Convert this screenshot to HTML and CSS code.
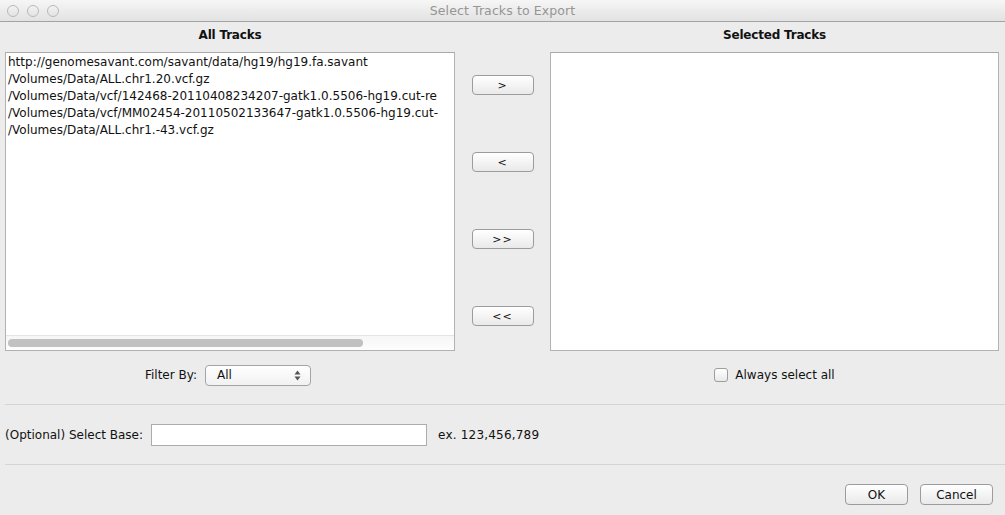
FILE: index.html
```html
<!DOCTYPE html>
<html>
<head>
<meta charset="utf-8">
<link rel="stylesheet" href="styles.css">
</head>
<body>
<div class="window">
  <div class="titlebar">
    <div class="lights">
      <span class="light"></span>
      <span class="light"></span>
      <span class="light"></span>
    </div>
    <div class="title">Select Tracks to Export</div>
  </div>

  <div class="panels">
    <div class="col col-left">
      <div class="col-head">All Tracks</div>
      <div class="list">
        <div class="list-items">
          <div class="item">http://genomesavant.com/savant/data/hg19/hg19.fa.savant</div>
          <div class="item">/Volumes/Data/ALL.chr1.20.vcf.gz</div>
          <div class="item">/Volumes/Data/vcf/142468-20110408234207-gatk1.0.5506-hg19.cut-re</div>
          <div class="item">/Volumes/Data/vcf/MM02454-20110502133647-gatk1.0.5506-hg19.cut-</div>
          <div class="item">/Volumes/Data/ALL.chr1.-43.vcf.gz</div>
        </div>
        <div class="hscroll"><div class="thumb"></div></div>
      </div>
      <div class="under">
        <span class="label">Filter By:</span>
        <div class="select">
          <span>All</span>
          <svg class="updown" width="7" height="11" viewBox="0 0 7 11">
            <path d="M0.5 4.5 L3.5 0.5 L6.5 4.5 Z" fill="#555"/>
            <path d="M0.5 6.5 L3.5 10.5 L6.5 6.5 Z" fill="#555"/>
          </svg>
        </div>
      </div>
    </div>

    <div class="mid">
      <button class="btn move">&gt;</button>
      <button class="btn move">&lt;</button>
      <button class="btn move">&gt;&gt;</button>
      <button class="btn move">&lt;&lt;</button>
    </div>

    <div class="col col-right">
      <div class="col-head">Selected Tracks</div>
      <div class="list list-empty"></div>
      <div class="under">
        <span class="checkbox"></span>
        <span class="label">Always select all</span>
      </div>
    </div>
  </div>

  <div class="sep sep-first"></div>

  <div class="base-row">
    <span class="label">(Optional) Select Base:</span>
    <div class="textfield"></div>
    <span class="label hint">ex. 123,456,789</span>
  </div>

  <div class="sep sep-second"></div>

  <div class="actions">
    <button class="btn action ok">OK</button>
    <button class="btn action cancel">Cancel</button>
  </div>
</div>
</body>
</html>
```

FILE: styles.css
```css
* { box-sizing: border-box; }

html, body {
  margin: 0;
  padding: 0;
}

body {
  width: 1005px;
  height: 515px;
  overflow: hidden;
  background: #ececec;
  font-family: "DejaVu Sans", "Liberation Sans", sans-serif;
  font-size: 12px;
  color: #111;
}

.window {
  width: 1005px;
  height: 515px;
  background: #ececec;
}

.titlebar {
  position: relative;
  height: 22px;
  border-bottom: 1px solid #a3a3a3;
  background: linear-gradient(#f6f6f6, #e2e2e2);
  display: flex;
  align-items: center;
  justify-content: center;
}

.lights {
  position: absolute;
  left: 7px;
  top: 5px;
  display: flex;
  gap: 8px;
}

.light {
  width: 12px;
  height: 12px;
  border-radius: 50%;
  border: 1px solid #b9b9b9;
  background: linear-gradient(#f2f2f2, #e4e4e4);
}

.title {
  color: #959595;
  font-size: 12.5px;
  letter-spacing: 0.1px;
}

.panels {
  display: flex;
  padding-left: 5px;
}

.col {
  display: flex;
  flex-direction: column;
}

.col-left { width: 450px; }
.col-right { width: 449px; }

.col-head {
  height: 30px;
  padding-top: 6px;
  line-height: 15px;
  text-align: center;
  font-weight: bold;
  font-size: 12px;
  letter-spacing: -0.2px;
}

.list {
  height: 299px;
  background: #fff;
  border: 1px solid #b2b2b2;
  border-top-color: #a8a8a8;
  display: flex;
  flex-direction: column;
  overflow: hidden;
}

.list-items {
  flex: 1;
  padding: 1px 0 0 2px;
  overflow: hidden;
  white-space: nowrap;
}

.item {
  height: 17px;
  line-height: 17px;
}

.hscroll {
  height: 15px;
  border-top: 1px solid #e4e4e4;
  background: linear-gradient(#f6f6f6, #fdfdfd);
  padding: 3px 0 0 2px;
}

.thumb {
  width: 355px;
  height: 8px;
  border-radius: 4px;
  background: #c1c1c1;
}

.under {
  display: flex;
  align-items: center;
  justify-content: center;
  margin-top: 13px;
  height: 21px;
  padding-top: 1px;
}

.under .label { margin-right: 8px; }

.col-left .under { padding-right: 4px; }

.select {
  width: 106px;
  height: 21px;
  border: 1px solid #a4a4a4;
  border-radius: 4px;
  background: linear-gradient(#ffffff, #f1f1f1);
  display: flex;
  align-items: center;
  justify-content: space-between;
  padding: 0 9px 0 11px;
}

.checkbox {
  width: 14px;
  height: 14px;
  border: 1px solid #9d9d9d;
  border-radius: 3px;
  background: linear-gradient(#ffffff, #e9e9e9);
  margin-right: 7px;
}

.col-right .under .label { margin-right: 0; }

.mid {
  width: 95px;
  display: flex;
  flex-direction: column;
  align-items: center;
  padding-top: 53px;
  gap: 57px;
}

.btn {
  font-family: "DejaVu Sans", "Liberation Sans", sans-serif;
  font-size: 12px;
  color: #111;
  border: 1px solid #9c9c9c;
  border-radius: 4px;
  background: linear-gradient(#ffffff, #f3f3f3 55%, #e9e9e9);
  padding: 0;
  margin: 0;
}

.move {
  width: 62px;
  height: 20px;
  font-size: 11px;
  letter-spacing: 1px;
}

.sep {
  height: 1px;
  background: #d4d4d4;
  margin-left: 5px;
}

.sep-first { margin-top: 19px; }

.base-row {
  display: flex;
  align-items: center;
  margin-top: 19px;
  height: 22px;
  padding-left: 5px;
}

.textfield {
  width: 276px;
  height: 22px;
  background: #fff;
  border: 1px solid #acacac;
  margin-left: 8px;
}

.hint { margin-left: 11px; letter-spacing: 0.2px; }

.sep-second { margin-top: 18px; }

.actions {
  display: flex;
  justify-content: flex-end;
  gap: 12px;
  margin-top: 19px;
  padding-right: 12px;
}

.action {
  height: 21px;
}

.ok { width: 63px; }
.cancel { width: 73px; }
```
